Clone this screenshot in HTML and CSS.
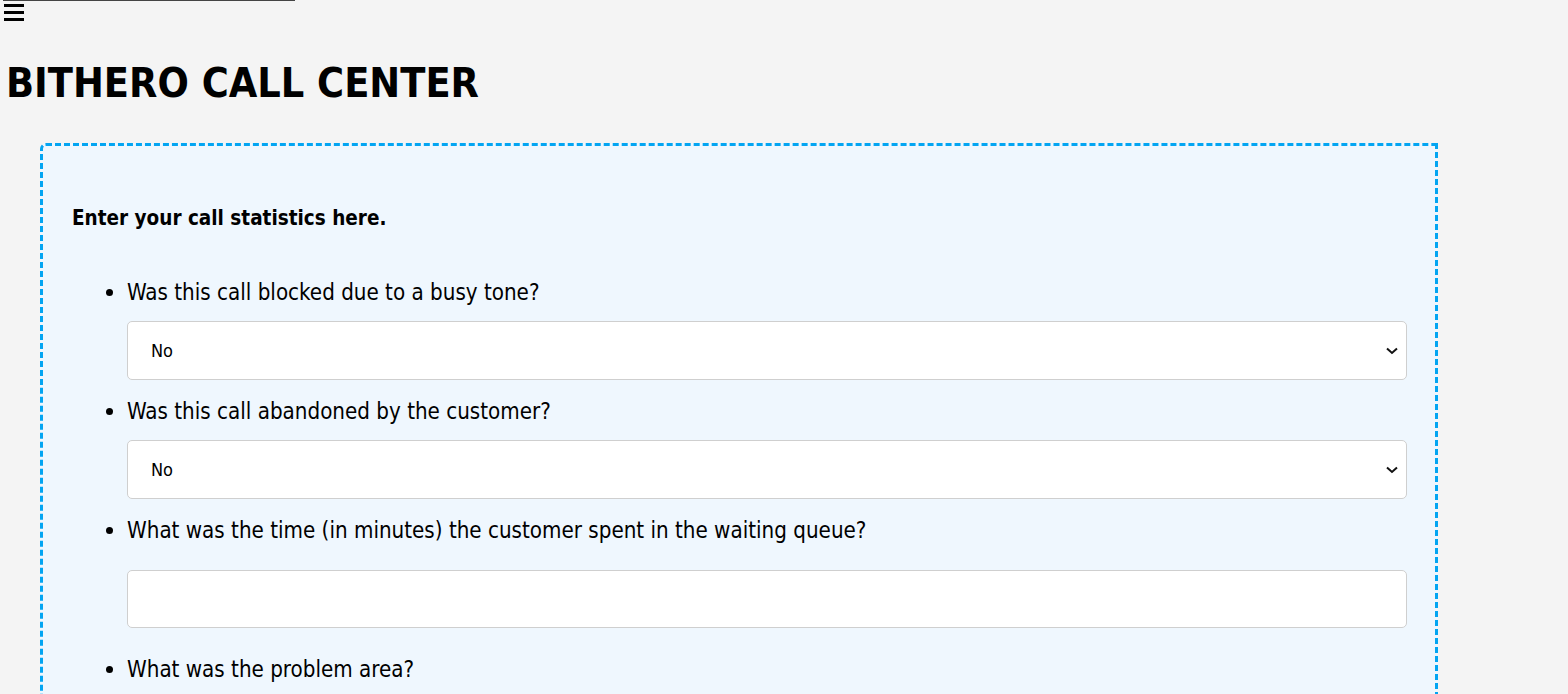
FILE: index.html
```html
<!DOCTYPE html>
<html lang="en">
<head>
<meta charset="utf-8">
<title>Bithero Call Center</title>
<link rel="stylesheet" href="styles.css">
</head>
<body>
<div class="topbar"></div>
<div class="menu-icon" aria-label="menu">
  <span></span><span></span><span></span>
</div>
<h1 class="title">BITHERO CALL CENTER</h1>
<form class="panel">
  <p class="intro">Enter your call statistics here.</p>
  <ul class="questions">
    <li class="q">
      <label class="q-label" for="busy">Was this call blocked due to a busy tone?</label>
      <select id="busy" class="field select-field">
        <option>No</option>
        <option>Yes</option>
      </select>
    </li>
    <li class="q">
      <label class="q-label" for="abandon">Was this call abandoned by the customer?</label>
      <select id="abandon" class="field select-field">
        <option>No</option>
        <option>Yes</option>
      </select>
    </li>
    <li class="q">
      <label class="q-label" for="wait">What was the time (in minutes) the customer spent in the waiting queue?</label>
      <input id="wait" class="field input-field" type="text">
    </li>
    <li class="q">
      <label class="q-label" for="area">What was the problem area?</label>
    </li>
  </ul>
</form>
</body>
</html>
```
FILE: styles.css
```css
html, body {
  margin: 0;
  padding: 0;
}
body {
  background: #f4f4f4;
  font-family: "DejaVu Sans Condensed", "DejaVu Sans", sans-serif;
  font-stretch: condensed;
  color: #000;
}
.topbar {
  margin-left: 3px;
  width: 290px;
  height: 0;
  border: 1px solid #444;
  border-top: 0;
}
.menu-icon {
  margin: 3px 0 0 4px;
  width: 20px;
  height: 17px;
  display: flex;
  flex-direction: column;
  justify-content: space-between;
}
.menu-icon span {
  display: block;
  height: 3px;
  background: #000;
}
.title {
  margin: 36px 0 0 6px;
  font-size: 41px;
  line-height: 52px;
  font-weight: 700;
}
.panel {
  box-sizing: border-box;
  margin: 34px 0 0 40px;
  width: 1398px;
  background: #eff7fe;
  border: 3px dashed #03a5f2;
  border-radius: 6px 0 0 0;
  padding: 60px 28px 40px 29px;
}
.intro {
  margin: 0;
  font-size: 20.5px;
  line-height: 24px;
  font-weight: 700;
}
.questions {
  margin: 50px 0 0 0;
  padding-left: 55px;
  font-size: 22.2px;
  line-height: 24px;
}
.q {
  margin: 0 0 19px 0;
}
.q-label {
  display: block;
}
.field {
  display: block;
  box-sizing: border-box;
  width: 100%;
  background-color: #fff;
  border: 1px solid #cfcfcf;
  border-radius: 5px;
  font-family: "DejaVu Sans Condensed", "DejaVu Sans", sans-serif;
  font-stretch: condensed;
  font-size: 18px;
  color: #000;
}
.select-field {
  margin-top: 17px;
  height: 59px;
  padding: 0 30px 0 23px;
  appearance: none;
  -webkit-appearance: none;
  background-image: url("data:image/svg+xml,%3Csvg xmlns='http://www.w3.org/2000/svg' width='12' height='8' viewBox='0 0 12 8'%3E%3Cpath d='M1 1.5 L6 6 L11 1.5' fill='none' stroke='%23111' stroke-width='2'/%3E%3C/svg%3E");
  background-repeat: no-repeat;
  background-position: right 8px center;
  background-size: 12px 8px;
}
.input-field {
  margin-top: 28px;
  margin-bottom: 29px;
  height: 58px;
  padding: 0 20px;
}
```
